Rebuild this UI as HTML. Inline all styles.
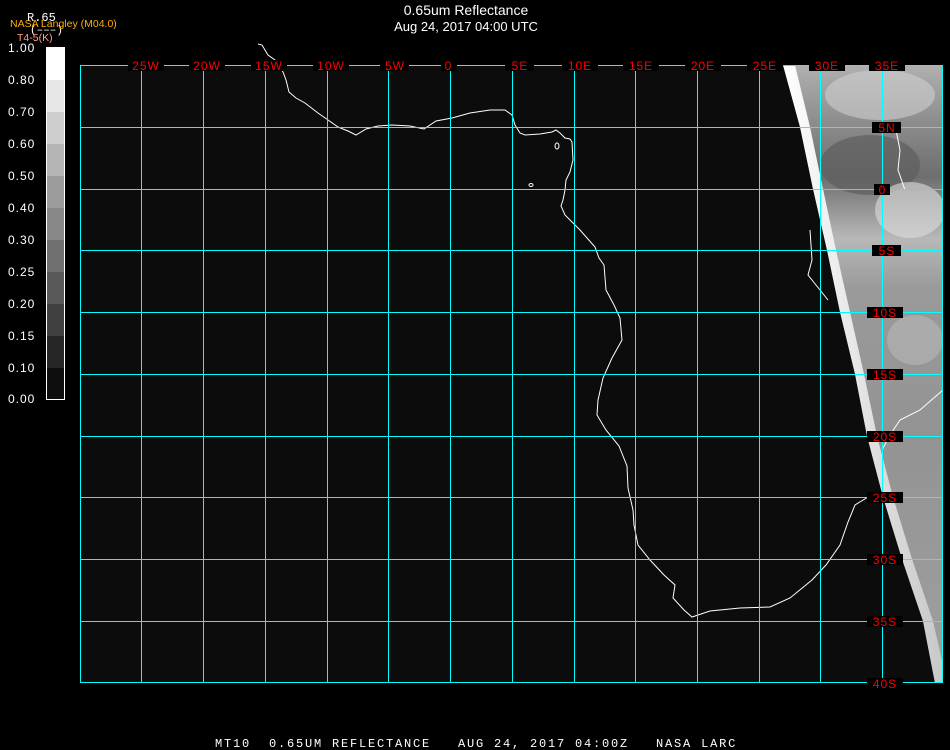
<!DOCTYPE html>
<html><head><meta charset="utf-8"><style>
html,body{margin:0;padding:0;background:#000;width:950px;height:750px;overflow:hidden}
svg{display:block}
text{font-family:"Liberation Sans",sans-serif}
.m{font-family:"Liberation Mono",monospace}
</style></head><body>
<svg width="950" height="750" viewBox="0 0 950 750" xmlns="http://www.w3.org/2000/svg">
<defs>
<linearGradient id="sat" x1="0" y1="0" x2="0" y2="1">
<stop offset="0" stop-color="#b0b0b0"/>
<stop offset="0.1" stop-color="#8a8a8a"/>
<stop offset="0.18" stop-color="#6e6e6e"/>
<stop offset="0.28" stop-color="#b8b8b8"/>
<stop offset="0.36" stop-color="#9a9a9a"/>
<stop offset="0.6" stop-color="#939393"/>
<stop offset="1" stop-color="#a0a0a0"/>
</linearGradient>
<linearGradient id="edge" x1="0" y1="0" x2="1" y2="0">
<stop offset="0" stop-color="#ffffff"/>
<stop offset="1" stop-color="#c8c8c8"/>
</linearGradient>
<clipPath id="cp"><polygon points="783,65 943,65 943,683 935,683 923,621 902,559 883,497 867,436 855,374 840,312 827,250 813,189 800,127"/></clipPath>
</defs>
<rect x="80" y="65" width="863" height="618" fill="#0c0c0c"/>
<!-- satellite data -->
<g clip-path="url(#cp)">
<rect x="780" y="65" width="165" height="620" fill="url(#sat)"/>
<ellipse cx="880" cy="95" rx="55" ry="25" fill="#cfcfcf" opacity="0.6"/>
<ellipse cx="870" cy="165" rx="50" ry="30" fill="#5e5e5e" opacity="0.7"/>
<ellipse cx="910" cy="210" rx="35" ry="28" fill="#dedede" opacity="0.6"/>
<ellipse cx="915" cy="340" rx="28" ry="25" fill="#bdbdbd" opacity="0.5"/>
</g>
<polygon points="783,65 795,65 810,127 823,189 836,250 850,312 864,374 877,436 893,497 912,559 933,621 943,665 943,683 935,683 923,621 902,559 883,497 867,436 855,374 840,312 827,250 813,189 800,127" fill="url(#edge)"/>
<!-- coastline -->
<polyline fill="none" stroke="#fff" stroke-width="1" points="258,44 262,45 268,55 275,60 283,72 286,80 289,92 296,98 305,103 318,113 328,120 338,127 348,131 356,135 366,129 378,126 392,125 410,126 424,129 436,121 452,118 470,113 490,110 505,110 512,115 515,125 520,133 525,135 540,134 552,132 556,130 560,133 565,138 570,139 572,142 573,160 570,172 566,180 565,190 563,200 561,206 565,215 575,225 580,230 595,247 599,258 604,265 606,290 614,305 620,318 622,340 612,358 603,378 598,400 597,415 606,430 619,446 627,466 628,488 633,510 634,525 638,545 650,560 664,575 675,585 673,598 684,610 692,617 710,611 740,608 770,607 790,598 812,580 826,565 840,545 848,522 855,505 868,497"/>
<ellipse cx="557" cy="146" rx="2" ry="3" fill="none" stroke="#fff"/>
<ellipse cx="531" cy="185" rx="2" ry="1.5" fill="none" stroke="#fff"/>
<polyline fill="none" stroke="#fff" points="810,230 812,260 808,275 820,290 828,300"/>
<polyline fill="none" stroke="#fff" points="943,390 920,410 900,420 890,435 882,450"/>
<polyline fill="none" stroke="#fff" points="895,125 900,150 898,170 905,190"/>
<!-- grid -->
<g stroke="#00ffff" stroke-width="1" fill="none">
<rect x="80.5" y="65.5" width="862" height="617"/>
<path d="M141.5 65V683M203.5 65V683M265.5 65V683M327.5 65V683M388.5 65V683M450.5 65V683M512.5 65V683M574.5 65V683M635.5 65V683M697.5 65V683M759.5 65V683M820.5 65V683M882.5 65V683"/>
<path d="M80 127.5H943M80 189.5H943M80 250.5H943M80 312.5H943M80 374.5H943M80 436.5H943M80 497.5H943M80 559.5H943M80 621.5H943"/>
</g>
<!-- labels -->
<g font-size="12" fill="#ff0000" class="m">
<g fill="#000">
<rect x="128" y="60" width="36" height="11"/><rect x="189" y="60" width="36" height="11"/><rect x="251" y="60" width="36" height="11"/><rect x="313" y="60" width="36" height="11"/><rect x="380" y="60" width="29" height="11"/><rect x="441" y="60" width="16" height="11"/><rect x="505" y="60" width="29" height="11"/><rect x="562" y="60" width="36" height="11"/><rect x="623" y="60" width="36" height="11"/><rect x="685" y="60" width="36" height="11"/><rect x="747" y="60" width="36" height="11"/><rect x="809" y="60" width="36" height="11"/><rect x="869" y="60" width="36" height="11"/>
<rect x="872" y="122" width="29" height="11"/><rect x="874" y="184" width="16" height="11"/><rect x="872" y="245" width="29" height="11"/><rect x="867" y="307" width="36" height="11"/><rect x="867" y="369" width="36" height="11"/><rect x="867" y="431" width="36" height="11"/><rect x="867" y="492" width="36" height="11"/><rect x="867" y="554" width="36" height="11"/><rect x="867" y="616" width="36" height="11"/><rect x="867" y="678" width="36" height="11"/>
</g>
<text x="146" y="70" text-anchor="middle" letter-spacing="1">25W</text>
<text x="207" y="70" text-anchor="middle" letter-spacing="1">20W</text>
<text x="269" y="70" text-anchor="middle" letter-spacing="1">15W</text>
<text x="331" y="70" text-anchor="middle" letter-spacing="1">10W</text>
<text x="395" y="70" text-anchor="middle" letter-spacing="1">5W</text>
<text x="448" y="70" text-anchor="middle">0</text>
<text x="520" y="70" text-anchor="middle" letter-spacing="1">5E</text>
<text x="580" y="70" text-anchor="middle" letter-spacing="1">10E</text>
<text x="641" y="70" text-anchor="middle" letter-spacing="1">15E</text>
<text x="703" y="70" text-anchor="middle" letter-spacing="1">20E</text>
<text x="765" y="70" text-anchor="middle" letter-spacing="1">25E</text>
<text x="827" y="70" text-anchor="middle" letter-spacing="1">30E</text>
<text x="887" y="70" text-anchor="middle" letter-spacing="1">35E</text>
<text x="887" y="132" text-anchor="middle" letter-spacing="1">5N</text>
<text x="882" y="194" text-anchor="middle">0</text>
<text x="887" y="255" text-anchor="middle" letter-spacing="1">5S</text>
<text x="885" y="317" text-anchor="middle" letter-spacing="1">10S</text>
<text x="885" y="379" text-anchor="middle" letter-spacing="1">15S</text>
<text x="885" y="441" text-anchor="middle" letter-spacing="1">20S</text>
<text x="885" y="502" text-anchor="middle" letter-spacing="1">25S</text>
<text x="885" y="564" text-anchor="middle" letter-spacing="1">30S</text>
<text x="885" y="626" text-anchor="middle" letter-spacing="1">35S</text>
<text x="885" y="688" text-anchor="middle" letter-spacing="1">40S</text>
</g>
<!-- legend bar -->
<g>
<rect x="46" y="47" width="19" height="33" fill="#fff"/>
<rect x="46" y="80" width="19" height="32" fill="#e6e6e6"/>
<rect x="46" y="112" width="19" height="32" fill="#cdcdcd"/>
<rect x="46" y="144" width="19" height="32" fill="#b4b4b4"/>
<rect x="46" y="176" width="19" height="32" fill="#9c9c9c"/>
<rect x="46" y="208" width="19" height="32" fill="#878787"/>
<rect x="46" y="240" width="19" height="32" fill="#707070"/>
<rect x="46" y="272" width="19" height="32" fill="#595959"/>
<rect x="46" y="304" width="19" height="32" fill="#404040"/>
<rect x="46" y="336" width="19" height="32" fill="#262626"/>
<rect x="46" y="368" width="19" height="32" fill="#0e0e0e"/>
<rect x="46.5" y="47.5" width="18" height="352" fill="none" stroke="#fff"/>
</g>
<g font-size="12" fill="#fff" class="m" letter-spacing="1">
<text x="8" y="52">1.00</text>
<text x="8" y="84">0.80</text>
<text x="8" y="116">0.70</text>
<text x="8" y="148">0.60</text>
<text x="8" y="180">0.50</text>
<text x="8" y="212">0.40</text>
<text x="8" y="244">0.30</text>
<text x="8" y="276">0.25</text>
<text x="8" y="308">0.20</text>
<text x="8" y="340">0.15</text>
<text x="8" y="372">0.10</text>
<text x="8" y="403">0.00</text>
</g>
<text x="27" y="21" font-size="12" fill="#fff" class="m">R.65</text>
<text x="30" y="33" font-size="11" fill="#fff" class="m">(–––)</text>
<text x="10" y="27" font-size="10.5" fill="#ffb000">NASA Langley (M04.0)</text>
<text x="17" y="41" font-size="10.5" fill="#ff9f7f">T4-5(K)</text>
<text x="466" y="15" font-size="14" fill="#fff" text-anchor="middle">0.65um Reflectance</text>
<text x="466" y="31" font-size="13" fill="#fff" text-anchor="middle">Aug 24, 2017 04:00 UTC</text>
<text x="215" y="747" font-size="12" fill="#fff" class="m" letter-spacing="1.8" xml:space="preserve">MT10  0.65UM REFLECTANCE   AUG 24, 2017 04:00Z   NASA LARC</text>
</svg>
</body></html>
